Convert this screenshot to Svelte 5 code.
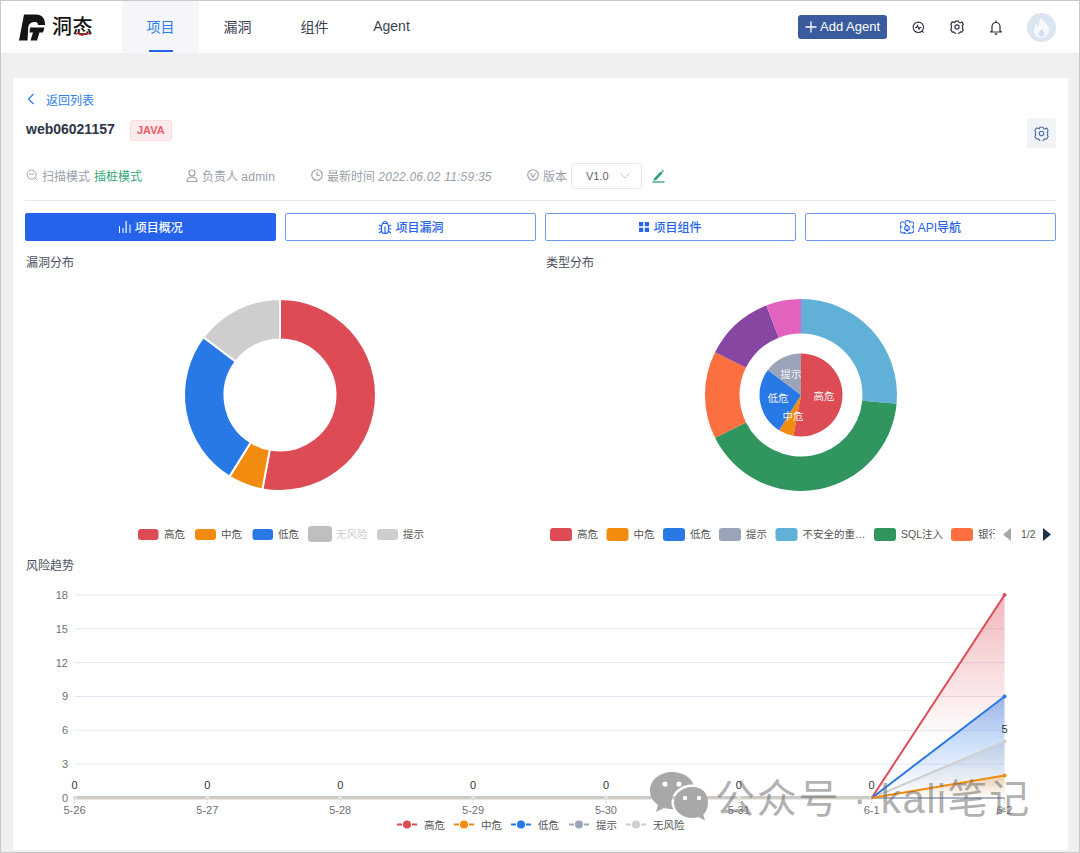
<script lang="ts">
  const COLORS = {
    high: '#dd4b55', mid: '#f28c0f', low: '#2878e6', tip: '#9aa3b8', none: '#cecece',
    sky: '#60b0d8', green: '#31955f', coral: '#fb6f40', purple: '#8746a2', pink: '#e262bd',
  };

  /** Annular sector, angles in degrees, clockwise from 12 o'clock */
  function sector(cx: number, cy: number, r0: number, r1: number, a0: number, a1: number): string {
    const pt = (r: number, a: number) => {
      const t = (a - 90) * Math.PI / 180;
      return `${(cx + r * Math.cos(t)).toFixed(2)} ${(cy + r * Math.sin(t)).toFixed(2)}`;
    };
    const large = a1 - a0 > 180 ? 1 : 0;
    if (r0 === 0) return `M${cx} ${cy}L${pt(r1, a0)}A${r1} ${r1} 0 ${large} 1 ${pt(r1, a1)}Z`;
    return `M${pt(r1, a0)}A${r1} ${r1} 0 ${large} 1 ${pt(r1, a1)}L${pt(r0, a1)}A${r0} ${r0} 0 ${large} 0 ${pt(r0, a0)}Z`;
  }

  /** Turn values into sectors */
  function slices(items: { v: number; c: string }[]) {
    const total = items.reduce((s, i) => s + i.v, 0);
    let a = 0;
    return items.map((i) => {
      const a0 = a;
      a += (i.v / total) * 360;
      return { a0, a1: a, c: i.c };
    });
  }

  const severity = slices([
    { v: 18, c: COLORS.high }, { v: 2, c: COLORS.mid }, { v: 9, c: COLORS.low }, { v: 5, c: COLORS.none },
  ]);
  const severityInner = slices([
    { v: 18, c: COLORS.high }, { v: 2, c: COLORS.mid }, { v: 9, c: COLORS.low }, { v: 5, c: COLORS.tip },
  ]);
  const types = slices([
    { v: 9, c: COLORS.sky }, { v: 14, c: COLORS.green }, { v: 5, c: COLORS.coral },
    { v: 4, c: COLORS.purple }, { v: 2, c: COLORS.pink },
  ]);

  const leftLegend = [
    { x: 138, w: 20.5, y: 529, h: 11, c: COLORS.high, label: '高危', tx: 164 },
    { x: 195, w: 21, y: 529, h: 11, c: COLORS.mid, label: '中危', tx: 221 },
    { x: 252.5, w: 20.5, y: 529, h: 11, c: COLORS.low, label: '低危', tx: 278 },
    { x: 308, w: 24, y: 526, h: 16, c: '#bfbfbf', label: '无风险', tx: 336, off: true },
    { x: 377, w: 21, y: 529, h: 11, c: COLORS.none, label: '提示', tx: 403 },
  ];
  const rightLegend = [
    { x: 550, c: COLORS.high, label: '高危' },
    { x: 606.5, c: COLORS.mid, label: '中危' },
    { x: 663, c: COLORS.low, label: '低危' },
    { x: 719, c: COLORS.tip, label: '提示' },
    { x: 775.5, c: COLORS.sky, label: '不安全的重…' },
    { x: 874, c: COLORS.green, label: 'SQL注入' },
    { x: 951, c: COLORS.coral, label: '银行' },
  ];

  // trend chart scale
  const X0 = 74.5;
  const STEP = 132.86;
  const Y0 = 798;
  const UNIT = 11.28;
  const days = ['5-26', '5-27', '5-28', '5-29', '5-30', '5-31', '6-1', '6-2'];
  const ticks = [0, 3, 6, 9, 12, 15, 18];
  const xAt = (i: number) => X0 + i * STEP;
  const yAt = (v: number) => Y0 - v * UNIT;
  const series = [
    { id: 'high', c: COLORS.high, v: 18, fill: 0.4, end: 0.72 },
    { id: 'none', c: '#cfcfcf', v: 5, fill: 0.5, end: 1 },
    { id: 'low', c: COLORS.low, v: 9, fill: 0.45, end: 0.95 },
    { id: 'tip', c: '#8d97b3', v: 0, fill: 0, end: 1 },
    { id: 'mid', c: COLORS.mid, v: 2, fill: 0.3, end: 1 },
  ];
  const trendLegend = [
    { x: 397, c: COLORS.high, label: '高危' },
    { x: 454, c: COLORS.mid, label: '中危' },
    { x: 511, c: COLORS.low, label: '低危' },
    { x: 569, c: COLORS.tip, label: '提示' },
    { x: 626, c: COLORS.none, label: '无风险' },
  ];
  const tabs = [
    { label: '项目概况', icon: 'bars', active: true },
    { label: '项目漏洞', icon: 'bug' },
    { label: '项目组件', icon: 'grid' },
    { label: 'API导航', icon: 'cube' },
  ];
  const gearPath = 'M6.300 1.300h3.400l.7 1.700 1.800.1 1.200-1 .1 0 1.700 2.900-1.100 1.400.6 1.600-.6 1.600 1.100 1.400-1.700 2.900-1.800-.3-1.300 1.100-.7 1.700H6.300l-.7-1.700-1.300-1.100-1.800.3-1.700-2.900 1.100-1.400-.6-1.600.6-1.600L.8 5l1.700-2.900 1.800.3L5.600 3z';
</script>

<div class="frame">
  <header class="topbar">
    <div class="logo">
      <svg width="26" height="27" viewBox="0 0 26 27">
        <path d="M5 .5H17C23 .5 26 4 26 11H19C19 8.500 17.500 7.500 15 8 11 8.500 9.500 10.500 9.200 14L8.500 26.500H0z" fill="#141414"/>
        <path d="M11 13.500H25.500L24 18.500H20.500L18 26.500H11.500L14 18.500H10.500z" fill="#141414"/>
      </svg>
      <span class="logo-text">洞态<svg class="wave" width="15" height="4" viewBox="0 0 17 4"><path d="M0 2.500c2-2 3-2 5 0s3 1 5-.5 3-1 6 0" fill="none" stroke="#d8232a" stroke-width="1.500"/></svg></span>
    </div>
    <nav class="nav">
      <span class="nav-item active">项目</span>
      <span class="nav-item">漏洞</span>
      <span class="nav-item">组件</span>
      <span class="nav-item">Agent</span>
    </nav>
    <div class="top-actions">
      <span class="add-agent">
        <svg width="12" height="12" viewBox="0 0 12 12"><path d="M6 .5v11M.5 6h11" stroke="#fff" stroke-width="1.300"/></svg>
        Add Agent
      </span>
      <svg class="top-icon" width="13" height="13" viewBox="0 0 14 14" fill="none" stroke="#2c3242" stroke-width="1.200">
        <circle cx="6.800" cy="6.800" r="5.600"/><path d="M10.800 10.800l1.800 1.800M3.400 7h1.500l1.100-2 1.600 3.800 1-1.800h1.500"/>
      </svg>
      <svg class="top-icon" width="14" height="14" viewBox="0 0 16 16" fill="none" stroke="#2c3242" stroke-width="1.300" stroke-linejoin="round">
        <path d={gearPath}/><circle cx="8" cy="8" r="2.400"/>
      </svg>
      <svg class="top-icon last" width="14" height="15" viewBox="0 0 14 15" fill="none" stroke="#2c3242" stroke-width="1.200">
        <path d="M7 .5v1.500M3 11V6.500a4 4 0 0 1 8 0V11l1.500 1h-11z" stroke-linejoin="round"/><path d="M5.800 14h2.400" stroke-width="1.500"/>
      </svg>
      <span class="avatar">
        <svg width="19" height="23" viewBox="0 0 20 24"><path d="M10 1c1 4 7 7 8 13 .6 5-3.500 9-8 9s-8.500-4-8-9c.3-3 2-5 3-6 .3 1.500 1 2.500 2 3C7 7 8.500 4 10 1z" fill="#f7f9fc"/><path d="M10 13c1 2 3 3 3 5.500a3 3 0 0 1-6 0c0-2 2-3 3-5.500z" fill="#d3dff0"/></svg>
      </span>
    </div>
  </header>

  <main class="card">
    <div class="back">
      <svg width="8" height="12" viewBox="0 0 8 12"><path d="M6.500 1L1.500 6l5 5" fill="none" stroke="#2e7de8" stroke-width="1.200"/></svg>
      <span>返回列表</span>
    </div>

    <div class="title-row">
      <div class="title-left">
        <span class="project-name">web06021157</span>
        <span class="lang-tag">JAVA</span>
      </div>
      <span class="settings-btn">
        <svg width="15" height="15" viewBox="0 0 16 16" fill="none" stroke="#4d6ea8" stroke-width="1.200" stroke-linejoin="round">
          <path d={gearPath}/><circle cx="8" cy="8" r="2.400"/>
        </svg>
      </span>
    </div>

    <div class="meta-row">
      <span class="meta mode">
        <svg width="12" height="12" viewBox="0 0 14 14" fill="none" stroke="#9aa0ab" stroke-width="1.100"><circle cx="6.500" cy="6.500" r="5.300"/><path d="M10.500 10.500l2.500 2.500M3.500 7l2-1.500 1.500 1.500 2.500-2"/></svg>
        <span>扫描模式</span><span class="green">插桩模式</span>
      </span>
      <span class="meta owner">
        <svg width="12" height="13" viewBox="0 0 12 13" fill="none" stroke="#9aa0ab" stroke-width="1.100"><circle cx="6" cy="4" r="3"/><path d="M1 12.500c0-3 1.500-4.500 5-4.500s5 1.500 5 4.500z"/></svg>
        <span>负责人 <span class="latin">admin</span></span>
      </span>
      <span class="meta time">
        <svg width="12" height="12" viewBox="0 0 12 12" fill="none" stroke="#9aa0ab" stroke-width="1.100"><circle cx="6" cy="6" r="5.300"/><path d="M6 2.800V6.300h3"/></svg>
        <span>最新时间 <em class="latin">2022.06.02 11:59:35</em></span>
      </span>
      <span class="meta version">
        <svg width="12" height="12" viewBox="0 0 12 12" fill="none" stroke="#9aa0ab" stroke-width="1.100"><circle cx="6" cy="6" r="5.300"/><path d="M3.500 4l2.500 4.300L8.500 4"/></svg>
        <span>版本</span>
      </span>
      <span class="select">
        <span>V1.0</span>
        <svg width="10" height="6" viewBox="0 0 10 6"><path d="M.5 .5L5 5 9.500 .5" fill="none" stroke="#c4c8d0"/></svg>
      </span>
      <svg class="pencil" width="13" height="14" viewBox="0 0 13 14"><path d="M2 9.500L8.800 2.200l2 1.900L4 11.200l-2.500.4zM9.600 1.400l.7-.7 2 1.900-.7.700z" fill="#31a06e"/><path d="M0.500 13h12" stroke="#31a06e" stroke-width="1.300"/></svg>
    </div>

    <div class="tabs">
      {#each tabs as tab}
        <div class="tab" class:active={tab.active}>
          {#if tab.icon === 'bars'}
            <svg width="12" height="12" viewBox="0 0 12 12" fill="#fff"><path d="M0 5h1v7H0zM3.500 7h1v5h-1zM6.500 0h1.200v12H6.500zM10.500 3.500h1V12h-1z"/></svg>
          {:else if tab.icon === 'bug'}
            <svg width="14" height="14" viewBox="0 0 14 14" fill="none" stroke="#2563eb" stroke-width="1.200"><path d="M4.500 3.500h5L10.500 6v4.500a3.500 3 0 0 1-7 0V6zM5 3.500a2 2 0 0 1 4 0M7 6.500v6.500M.8 5l2.700 1.500M13.200 5l-2.700 1.500M.5 9H3.500M13.500 9h-3M1 13l2.800-2M13 13l-2.800-2"/></svg>
          {:else if tab.icon === 'grid'}
            <svg width="10" height="10" viewBox="0 0 10 10" fill="#2563eb"><path d="M0 0h4.200v4.200H0zM5.800 0H10v4.200H5.800zM0 5.800h4.200V10H0zM5.800 5.800H10V10H5.800z"/></svg>
          {:else}
            <svg width="14" height="14" viewBox="0 0 14 14" fill="none" stroke="#2563eb" stroke-width="1.100"><path d="M7 5.500a2.500 2.500 0 1 1 2.800-3.300A2.600 2.600 0 0 1 12.500 7 2.800 2.800 0 0 1 9.500 12.500 2.600 2.600 0 0 1 4.500 12.500 2.800 2.800 0 0 1 1.500 7 2.600 2.600 0 0 1 4.200 2.200M7 5.500L4.800 7v2.500L7 11l2.200-1.500V7zM7 8.200V11"/></svg>
          {/if}
          <span>{tab.label}</span>
        </div>
      {/each}
    </div>

    <div class="charts">
      <section>
        <h3 class="section-title">漏洞分布</h3>
        <svg class="pie-svg" width="510" height="285" viewBox="26 270 510 285">
          {#each severity as s}
            <path d={sector(280, 395, 55.5, 96, s.a0, s.a1)} fill={s.c} stroke="#fff" stroke-width="2"/>
          {/each}
          {#each leftLegend as l}
            <rect x={l.x} y={l.y} width={l.w} height={l.h} rx="3" fill={l.c}/>
            <text x={l.tx} y="538" class="legend" class:off={l.off}>{l.label}</text>
          {/each}
        </svg>
      </section>
      <section>
        <h3 class="section-title">类型分布</h3>
        <svg class="pie-svg" width="510" height="285" viewBox="546 270 510 285">
          {#each types as s}
            <path d={sector(801, 395, 61.5, 96, s.a0, s.a1)} fill={s.c}/>
          {/each}
          {#each severityInner as s}
            <path d={sector(801, 395, 0, 41.5, s.a0, s.a1)} fill={s.c}/>
          {/each}
          <text x="824" y="400" class="pie-label" text-anchor="middle">高危</text>
          <text x="793" y="420" class="pie-label" text-anchor="middle">中危</text>
          <text x="778" y="402" class="pie-label" text-anchor="middle">低危</text>
          <text x="791" y="378" class="pie-label" text-anchor="middle">提示</text>
          {#each rightLegend as l}
            <rect x={l.x} y="528" width="22" height="13" rx="3" fill={l.c}/>
          {/each}
          {#each rightLegend.slice(0, 6) as l}
            <text x={l.x + 27} y="538" class="legend">{l.label}</text>
          {/each}
          <defs><clipPath id="legend-clip"><rect x="978" y="524" width="17" height="20"/></clipPath></defs>
          <text x="978" y="538" class="legend" clip-path="url(#legend-clip)">银行</text>
          <path d="M1011 528v13l-8-6.500z" fill="#a9a9a9"/>
          <text x="1021" y="538" class="legend">1/2</text>
          <path d="M1043 528v13l8-6.500z" fill="#1f3247"/>
        </svg>
      </section>
    </div>

    <div class="trend-block">
      <h3 class="section-title trend-title">风险趋势</h3>
      <svg class="trend" width="1030" height="270" viewBox="26 573 1030 270">
        <defs>
          {#each series as s}
            <linearGradient id="fill-{s.id}" x1="0" y1={yAt(s.v)} x2="0" y2={Y0} gradientUnits="userSpaceOnUse">
              <stop offset="0" stop-color={s.c} stop-opacity={s.fill}/>
              <stop offset={s.end} stop-color={s.c} stop-opacity="0"/>
            </linearGradient>
          {/each}
        </defs>

        {#each ticks as t}
          {#if t > 0}<line x1={X0} x2={xAt(7)} y1={yAt(t)} y2={yAt(t)} class="grid"/>{/if}
          <text x="68" y={yAt(t) + 4} class="axis" text-anchor="end">{t}</text>
        {/each}

        {#each days as d, i}
          <line x1={xAt(i)} x2={xAt(i)} y1="799" y2="803" class="tick"/>
          <text x={xAt(i)} y="814" class="axis" text-anchor="middle">{d}</text>
          {#if i < 7}
            <text x={xAt(i)} y="789" class="value" text-anchor="middle">0</text>
          {/if}
        {/each}

        <line x1={X0} x2={xAt(6)} y1="797.500" y2="797.500" class="zero"/>
        <line x1={X0} x2={xAt(6)} y1="799" y2="799" class="zero-mid"/>
        {#each days.slice(0, 7) as _, i}
          <circle cx={xAt(i)} cy="797.500" r="2" fill="#e2e2e2"/>
        {/each}

        {#each series as s}
          {#if s.v > 0}
            <path d="M{xAt(6)} {Y0}L{xAt(7)} {yAt(s.v)}V{Y0}Z" fill="url(#fill-{s.id})"/>
          {/if}
        {/each}
        {#each series as s}
          <line x1={xAt(6)} y1={Y0} x2={xAt(7)} y2={yAt(s.v)} stroke={s.c} stroke-width={s.v === 0 ? 1.5 : 2}/>
          {#if s.v > 0}
            <circle cx={xAt(7)} cy={yAt(s.v)} r="2" fill={s.c}/>
          {/if}
        {/each}
        <text x={xAt(7)} y="733" class="value" text-anchor="middle">5</text>

        {#each trendLegend as l}
          <line x1={l.x} x2={l.x + 20} y1="824.500" y2="824.500" stroke={l.c} stroke-width="2" stroke-dasharray="5 10 5 0"/>
          <circle cx={l.x + 10} cy="824.500" r="4" fill={l.c}/>
          <text x={l.x + 27} y="828.500" class="legend">{l.label}</text>
        {/each}
      </svg>
    </div>
  </main>

  <div class="watermark">
    <svg width="58" height="50" viewBox="0 0 58 50">
      <path d="M22 1C10 1 0 9 0 19.500c0 6 3 11 8 14.500l-2 7 8-4c2.500 .8 5 1.200 8 1.200h1.500C22 36 21.500 33.800 21.500 31.500 21.500 21 31 13.500 42.500 13.500h1C41 6 32 1 22 1z" fill="#a8a8a8"/>
      <path d="M42.500 16C32 16 24 23 24 31.500S32 47 42.500 47c2.200 0 4-.3 6-.9l6.500 3.400-1.700-5.800c3-2.800 4.700-7 4.700-12.200C58 23 53 16 42.500 16z" fill="#a8a8a8"/>
      <circle cx="15" cy="13" r="2.600" fill="#fff"/><circle cx="29" cy="13" r="2.600" fill="#fff"/>
      <circle cx="35" cy="27" r="2.200" fill="#fff"/><circle cx="49" cy="27" r="2.200" fill="#fff"/>
    </svg>
    <span>公众号 · kali笔记</span>
  </div>
</div>

<style>
  :global(body) {
    margin: 0;
    background: #f0f0f0;
  }

  .frame {
    position: relative;
    width: 1080px;
    height: 853px;
    box-sizing: border-box;
    overflow: hidden;
    background: #f0f0f0;
    border: 1px solid #c8c8c8;
    font-family: "Liberation Sans", "Noto Sans CJK SC", sans-serif;
    color: #333;
  }

  .topbar {
    display: flex;
    align-items: center;
    height: 52px;
    background: #fff;
  }

  .logo {
    display: flex;
    align-items: center;
    gap: 7px;
    width: 121px;
    padding-left: 18px;
    box-sizing: border-box;
  }

  .logo-text {
    position: relative;
    font-size: 20px;
    font-weight: 500;
    letter-spacing: 0.5px;
    color: #141414;
    line-height: 26px;
  }

  .wave {
    position: absolute;
    right: 2px;
    bottom: 4px;
  }

  .nav {
    display: flex;
    height: 100%;
  }

  .nav-item {
    position: relative;
    display: flex;
    align-items: center;
    justify-content: center;
    width: 77px;
    padding-bottom: 3px;
    box-sizing: border-box;
    font-size: 14px;
    color: #3a4150;
  }

  .nav-item.active {
    background: #f4f6fa;
    color: #2e7de8;
  }

  .nav-item.active::after {
    content: '';
    position: absolute;
    left: 27px;
    right: 26px;
    bottom: 1px;
    height: 2px;
    background: #2563eb;
  }

  .top-actions {
    display: flex;
    align-items: center;
    margin-left: auto;
    padding-right: 23px;
  }

  .add-agent {
    display: flex;
    align-items: center;
    justify-content: center;
    gap: 3px;
    width: 89px;
    height: 24px;
    margin-right: 25px;
    padding-bottom: 1px;
    box-sizing: border-box;
    background: #3a5c9e;
    border-radius: 3px;
    color: #fff;
    font-size: 13px;
  }

  .top-icon {
    margin-right: 25px;
  }

  .top-icon.last {
    margin-right: 24px;
  }

  .avatar {
    display: flex;
    align-items: center;
    justify-content: center;
    width: 29px;
    height: 29px;
    border-radius: 50%;
    background: #dbe5f1;
  }

  .card {
    margin: 25px 11px 0 12px;
    height: 772px;
    box-sizing: border-box;
    padding: 11px 12px 0 12px;
    background: #fff;
  }

  .back {
    display: flex;
    align-items: center;
    gap: 11px;
    height: 20px;
    padding-left: 2px;
    font-size: 12px;
    color: #2e7de8;
  }

  .title-row {
    display: flex;
    justify-content: space-between;
    align-items: flex-start;
    height: 30px;
    margin-top: 9px;
    padding-left: 1px;
  }

  .title-left {
    display: flex;
    align-items: center;
    gap: 15px;
    height: 22px;
  }

  .project-name {
    font-size: 14px;
    font-weight: 700;
    color: #2f3646;
  }

  .lang-tag {
    display: flex;
    align-items: center;
    justify-content: center;
    width: 42px;
    height: 21px;
    margin-top: 2px;
    box-sizing: border-box;
    background: #fdecee;
    border: 1px solid #fbdcdf;
    border-radius: 3px;
    font-size: 11px;
    font-weight: 700;
    color: #f1596a;
  }

  .settings-btn {
    display: flex;
    align-items: center;
    justify-content: center;
    width: 29px;
    height: 30px;
    background: #f1f3f7;
    border-radius: 2px;
  }

  .meta-row {
    position: relative;
    display: flex;
    align-items: center;
    height: 26px;
    margin-top: 15px;
    padding-bottom: 11px;
    border-bottom: 1px solid #e8e8e8;
    font-size: 12px;
    color: #9aa0ab;
  }

  .meta {
    display: flex;
    align-items: center;
    gap: 3px;
    padding-bottom: 2px;
  }

  .meta svg {
    margin-right: 1px;
  }

  .meta.mode { width: 161px; padding-left: 1px; box-sizing: border-box; }
  .meta.owner { width: 125px; }
  .meta.time { width: 216px; }
  .meta.version { width: 44px; }

  .latin {
    letter-spacing: 0.22px;
  }

  .meta em {
    font-style: italic;
  }

  .green {
    margin-left: 1px;
    color: #35a877;
  }

  .select {
    display: flex;
    align-items: center;
    justify-content: space-between;
    width: 71px;
    height: 26px;
    box-sizing: border-box;
    padding: 0 11px 0 14px;
    border: 1px solid #e4e6ea;
    border-radius: 4px;
    font-size: 11px;
    color: #5c6270;
  }

  .pencil {
    margin-left: 10px;
  }

  .tabs {
    display: grid;
    grid-template-columns: repeat(4, 1fr);
    gap: 8.500px;
    margin-top: 12px;
  }

  .tab {
    display: flex;
    align-items: center;
    justify-content: center;
    gap: 4px;
    height: 28px;
    padding-bottom: 1px;
    box-sizing: border-box;
    border: 1px solid #6f9bf2;
    border-radius: 2px;
    font-size: 12px;
    font-weight: 500;
    color: #2563eb;
  }

  .tab.active {
    background: #2563eb;
    border-color: #2563eb;
    color: #fff;
  }

  .charts {
    display: grid;
    grid-template-columns: 510px 510px;
    column-gap: 10px;
    padding-left: 1px;
  }

  .trend-block {
    padding-left: 1px;
  }

  .section-title {
    margin: 14px 0 0;
    height: 15px;
    font-size: 12px;
    font-weight: 400;
    line-height: 16px;
    color: #4a5060;
  }

  .pie-svg,
  .trend {
    display: block;
  }

  .trend-title {
    margin-top: 3px;
    height: 15px;
  }

  .legend {
    font-size: 10.500px;
    fill: #555;
  }

  .legend.off {
    fill: #ccc;
  }

  .pie-label {
    font-size: 10.500px;
    fill: #f4f4f4;
  }

  .grid {
    stroke: #e3e8f3;
    stroke-width: 1;
  }

  .axis {
    font-size: 11px;
    fill: #6e7079;
  }

  .value {
    font-size: 11px;
    fill: #333;
  }

  .tick {
    stroke: #b8b8b8;
    stroke-dasharray: 1.500 1.500;
  }

  .zero {
    stroke: #c9c9c9;
    stroke-width: 3;
  }

  .zero-mid {
    stroke: #d9cfc2;
    stroke-width: 1;
  }

  .watermark {
    position: absolute;
    left: 649px;
    top: 766px;
    display: flex;
    align-items: center;
    gap: 7px;
    white-space: nowrap;
    font-size: 40px;
    letter-spacing: 1.700px;
    color: rgba(100, 100, 100, 0.5);
  }
</style>
